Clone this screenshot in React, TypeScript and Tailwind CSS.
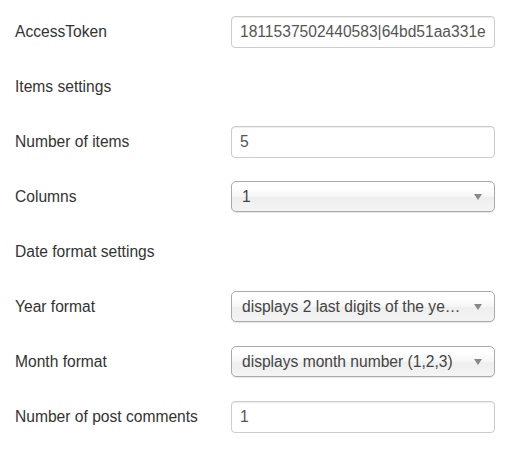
const font = "font-['Liberation_Sans',Arial,sans-serif]";

const TextField = ({ value }: { value: string }) => (
  <div className="flex h-[32px] w-[264px] items-center overflow-hidden whitespace-nowrap rounded-[4px] border border-[#cccccc] bg-white pl-[8px] pr-[6px] text-[15.6px] text-[#555555] shadow-[inset_0_1px_1px_rgba(0,0,0,0.075)]">
    {value}
  </div>
);

const ChosenSelect = ({ value }: { value: string }) => (
  <div className="flex h-[31px] w-[264px] items-center justify-between rounded-[5px] border border-[#aaaaaa] bg-[linear-gradient(#ffffff_20%,#f6f6f6_50%,#eeeeee_52%,#f4f4f4_100%)] pl-[10px] pr-[12px] text-[15.6px] text-[#444444] shadow-[0_1px_1px_rgba(0,0,0,0.1)]">
    <span className="truncate">{value}</span>
    <span className="ml-[8px] h-0 w-0 shrink-0 border-x-[4px] border-t-[6px] border-x-transparent border-t-[#888888]" />
  </div>
);

const Row = ({ label, children }: { label: string; children?: React.ReactNode }) => (
  <div className="flex h-[55px] items-center">
    <div className="w-[216px] shrink-0 pt-[1px] text-[15.6px] text-[#333333]">{label}</div>
    {children}
  </div>
);

export default function App() {
  return (
    <div className={`${font} min-h-screen bg-white pl-[15px] pt-[4px]`}>
      <Row label="AccessToken">
        <TextField value="1811537502440583|64bd51aa331e" />
      </Row>
      <Row label="Items settings" />
      <Row label="Number of items">
        <TextField value="5" />
      </Row>
      <Row label="Columns">
        <ChosenSelect value="1" />
      </Row>
      <Row label="Date format settings" />
      <Row label="Year format">
        {/* chosen cuts the long option text off */}
        <ChosenSelect value="displays 2 last digits of the ye…" />
      </Row>
      <Row label="Month format">
        <ChosenSelect value="displays month number (1,2,3)" />
      </Row>
      <Row label="Number of post comments">
        <TextField value="1" />
      </Row>
    </div>
  );
}
